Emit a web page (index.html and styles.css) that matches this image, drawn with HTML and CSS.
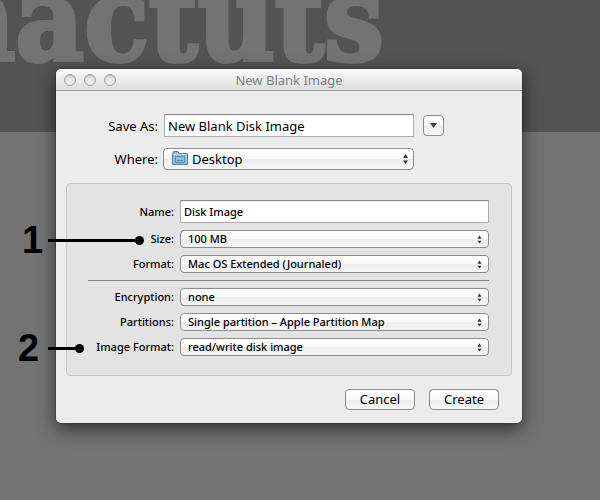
FILE: index.html
```html
<!DOCTYPE html>
<html lang="en">
<head>
    <meta charset="utf-8">
    <title>New Blank Image</title>
    <link rel="stylesheet" href="styles.css">
</head>
<body>
    <svg class="defs" aria-hidden="true">
        <symbol id="updown" viewBox="0 0 5 11"><path d="M2.5 0.5L5 4.5H0zM2.5 10.5L0 7H5z"/></symbol>
    </svg>
    <header class="banner"><div class="wordmark">mactuts</div></header>

    <main class="window">
        <div class="titlebar">
            <div class="lights">
                <button class="light" type="button" aria-label="Close"></button>
                <button class="light" type="button" aria-label="Minimize"></button>
                <button class="light" type="button" aria-label="Zoom"></button>
            </div>
            <h1>New Blank Image</h1>
        </div>

        <form class="sheet">
            <div class="save">
                <label for="saveas">Save As:</label>
                <input class="text" type="text" id="saveas" value="New Blank Disk Image">
                <button class="expand" type="button" aria-label="Show more">
                    <svg width="7" height="5"><path d="M0 0H7L3.5 5z"/></svg>
                </button>
                <label for="where">Where:</label>
                <div class="popup where">
                    <svg class="folder" width="16" height="14" viewBox="0 0 16 14">
                        <path d="M0.5 2.5L1.5 0.5H6L7 2.5H15.5V13.5H0.5z" fill="#92bcd8" stroke="#54819f"/>
                        <path d="M1 3.5H15" stroke="#c3deee"/>
                        <path d="M3.5 5.5H12.5V11.5H3.5zM5 9.5H11" fill="none" stroke="#5c8cad"/>
                    </svg>
                    <select id="where"><option>Desktop</option></select>
                    <svg class="arrows"><use href="#updown"/></svg>
                </div>
            </div>

            <div class="panel">
                <div class="row name">
                    <label for="name">Name:</label>
                    <input class="text" type="text" id="name" value="Disk Image">
                </div>
                <div class="row">
                    <div class="callout one"><b>1</b><i></i></div>
                    <label for="size">Size:</label>
                    <div class="popup">
                        <select id="size"><option>100 MB</option></select>
                        <svg class="arrows"><use href="#updown"/></svg>
                    </div>
                </div>
                <div class="row">
                    <label for="format">Format:</label>
                    <div class="popup">
                        <select id="format"><option>Mac OS Extended (Journaled)</option></select>
                        <svg class="arrows"><use href="#updown"/></svg>
                    </div>
                </div>
                <hr>
                <div class="row">
                    <label for="encryption">Encryption:</label>
                    <div class="popup">
                        <select id="encryption"><option>none</option></select>
                        <svg class="arrows"><use href="#updown"/></svg>
                    </div>
                </div>
                <div class="row">
                    <label for="partitions">Partitions:</label>
                    <div class="popup">
                        <select id="partitions"><option>Single partition – Apple Partition Map</option></select>
                        <svg class="arrows"><use href="#updown"/></svg>
                    </div>
                </div>
                <div class="row">
                    <div class="callout two"><b>2</b><i></i></div>
                    <label for="imageformat">Image Format:</label>
                    <div class="popup">
                        <select id="imageformat"><option>read/write disk image</option></select>
                        <svg class="arrows"><use href="#updown"/></svg>
                    </div>
                </div>
            </div>

            <div class="buttons">
                <button class="push" type="button">Cancel</button>
                <button class="push" type="button">Create</button>
            </div>
        </form>
    </main>
</body>
</html>
```
FILE: styles.css
```css
* { box-sizing: border-box; }
body { margin: 0; min-height: 100vh; background: #737373; font-family: "Noto Sans", "Open Sans", sans-serif; font-size: 13px; color: #000; }
button, input, select { font: inherit; color: inherit; margin: 0; }
.defs { display: none; }

.banner { height: 132px; background: #535353; overflow: hidden; }
.wordmark { margin: -16px 0 0 -97px; font: bold 118px/70px "DejaVu Serif Condensed", "DejaVu Serif", serif; color: #737373; white-space: nowrap; -webkit-text-stroke: 4px #737373; }

/* window */
.window { position: relative; max-width: 466px; margin: -63px 56px 0; background: #ececec; border-radius: 5px; box-shadow: 0 6px 18px rgba(0,0,0,.6), 0 0 2px rgba(0,0,0,.5); }
.titlebar { display: grid; grid-template-columns: 70px 1fr 70px; align-items: center; height: 22px; border-bottom: 1px solid #a0a0a0; border-radius: 5px 5px 0 0; background: linear-gradient(#fafafa, #dedede); }
.titlebar h1 { margin: 0; font-size: 13px; font-weight: 400; line-height: 20px; text-align: center; color: #808080; }
.lights { display: flex; gap: 8px; padding-left: 8px; }
.light { width: 12px; height: 12px; padding: 0; border: 1px solid #a2a2a2; border-radius: 50%; background: linear-gradient(#d8d8d8, #f8f8f8); box-shadow: inset 0 0 2px rgba(0,0,0,.25); }

.sheet { padding: 23px 10px 13px; }
.save { display: grid; grid-template-columns: 92px 251px 21px; column-gap: 5px; row-gap: 11px; align-items: center; }
.save label, .row label { text-align: right; white-space: nowrap; }
.save .text { width: 250px; margin-left: 1px; }
.text { width: 100%; height: 23px; padding: 0 3px; border: 1px solid #adadad; border-top-color: #8e8e8e; border-radius: 0; background: #fff; box-shadow: inset 0 1px 1px #e8e8e8; }
.expand { grid-column: 3; margin-left: 4px; width: 21px; height: 21px; padding: 0; display: flex; align-items: center; justify-content: center; }
.expand svg { fill: #444; }
.expand, .push, .popup select { border: 1px solid #8c8c8c; border-radius: 4px; background: linear-gradient(#fff, #f8f8f8 50%, #ececec 51%, #f6f6f6); }

.popup { position: relative; }
.popup select { display: block; width: 100%; height: 18px; padding: 0 20px 0 7px; line-height: 16px; appearance: none; }
.arrows { position: absolute; right: 7px; top: 5px; width: 5px; height: 9px; fill: #333; pointer-events: none; }
.where select { height: 22px; padding-left: 28px; line-height: 20px; }
.where .arrows { right: 6px; top: 5px; height: 12px; }
.folder { position: absolute; left: 9px; top: 3px; }

/* options */
.panel { margin-top: 13px; padding: 16px 22px 19px 21px; border: 1px solid #c6c6c6; border-radius: 4px; background: #e3e3e3; font-size: 11px; font-weight: 500; }
.row { position: relative; display: grid; grid-template-columns: 86px 1fr; column-gap: 6px; align-items: center; margin-bottom: 7px; }
.row:last-child { margin-bottom: 0; }
.row label { line-height: 18px; }
.panel hr { height: 1px; margin: 7px 0; border: 0; background: #858585; }

.buttons { display: flex; justify-content: flex-end; gap: 14px; margin-top: 13px; padding-right: 13px; }
.push { width: 70px; height: 21px; padding: 0; line-height: 19px; }

/* numbered callouts */
.callout { position: absolute; top: -10px; display: flex; align-items: center; height: 40px; }
.callout b { width: 26px; font: bold 38px/40px "Liberation Sans", Arial, sans-serif; }
.callout i { position: relative; height: 3px; background: #000; }
.callout i::after { content: ""; position: absolute; right: -4px; top: -3px; width: 9px; height: 9px; border-radius: 50%; background: #000; }
.one { left: -66px; }
.one i { width: 92px; }
.two { left: -70px; }
.two i { width: 32px; margin-left: 4px; }
```
